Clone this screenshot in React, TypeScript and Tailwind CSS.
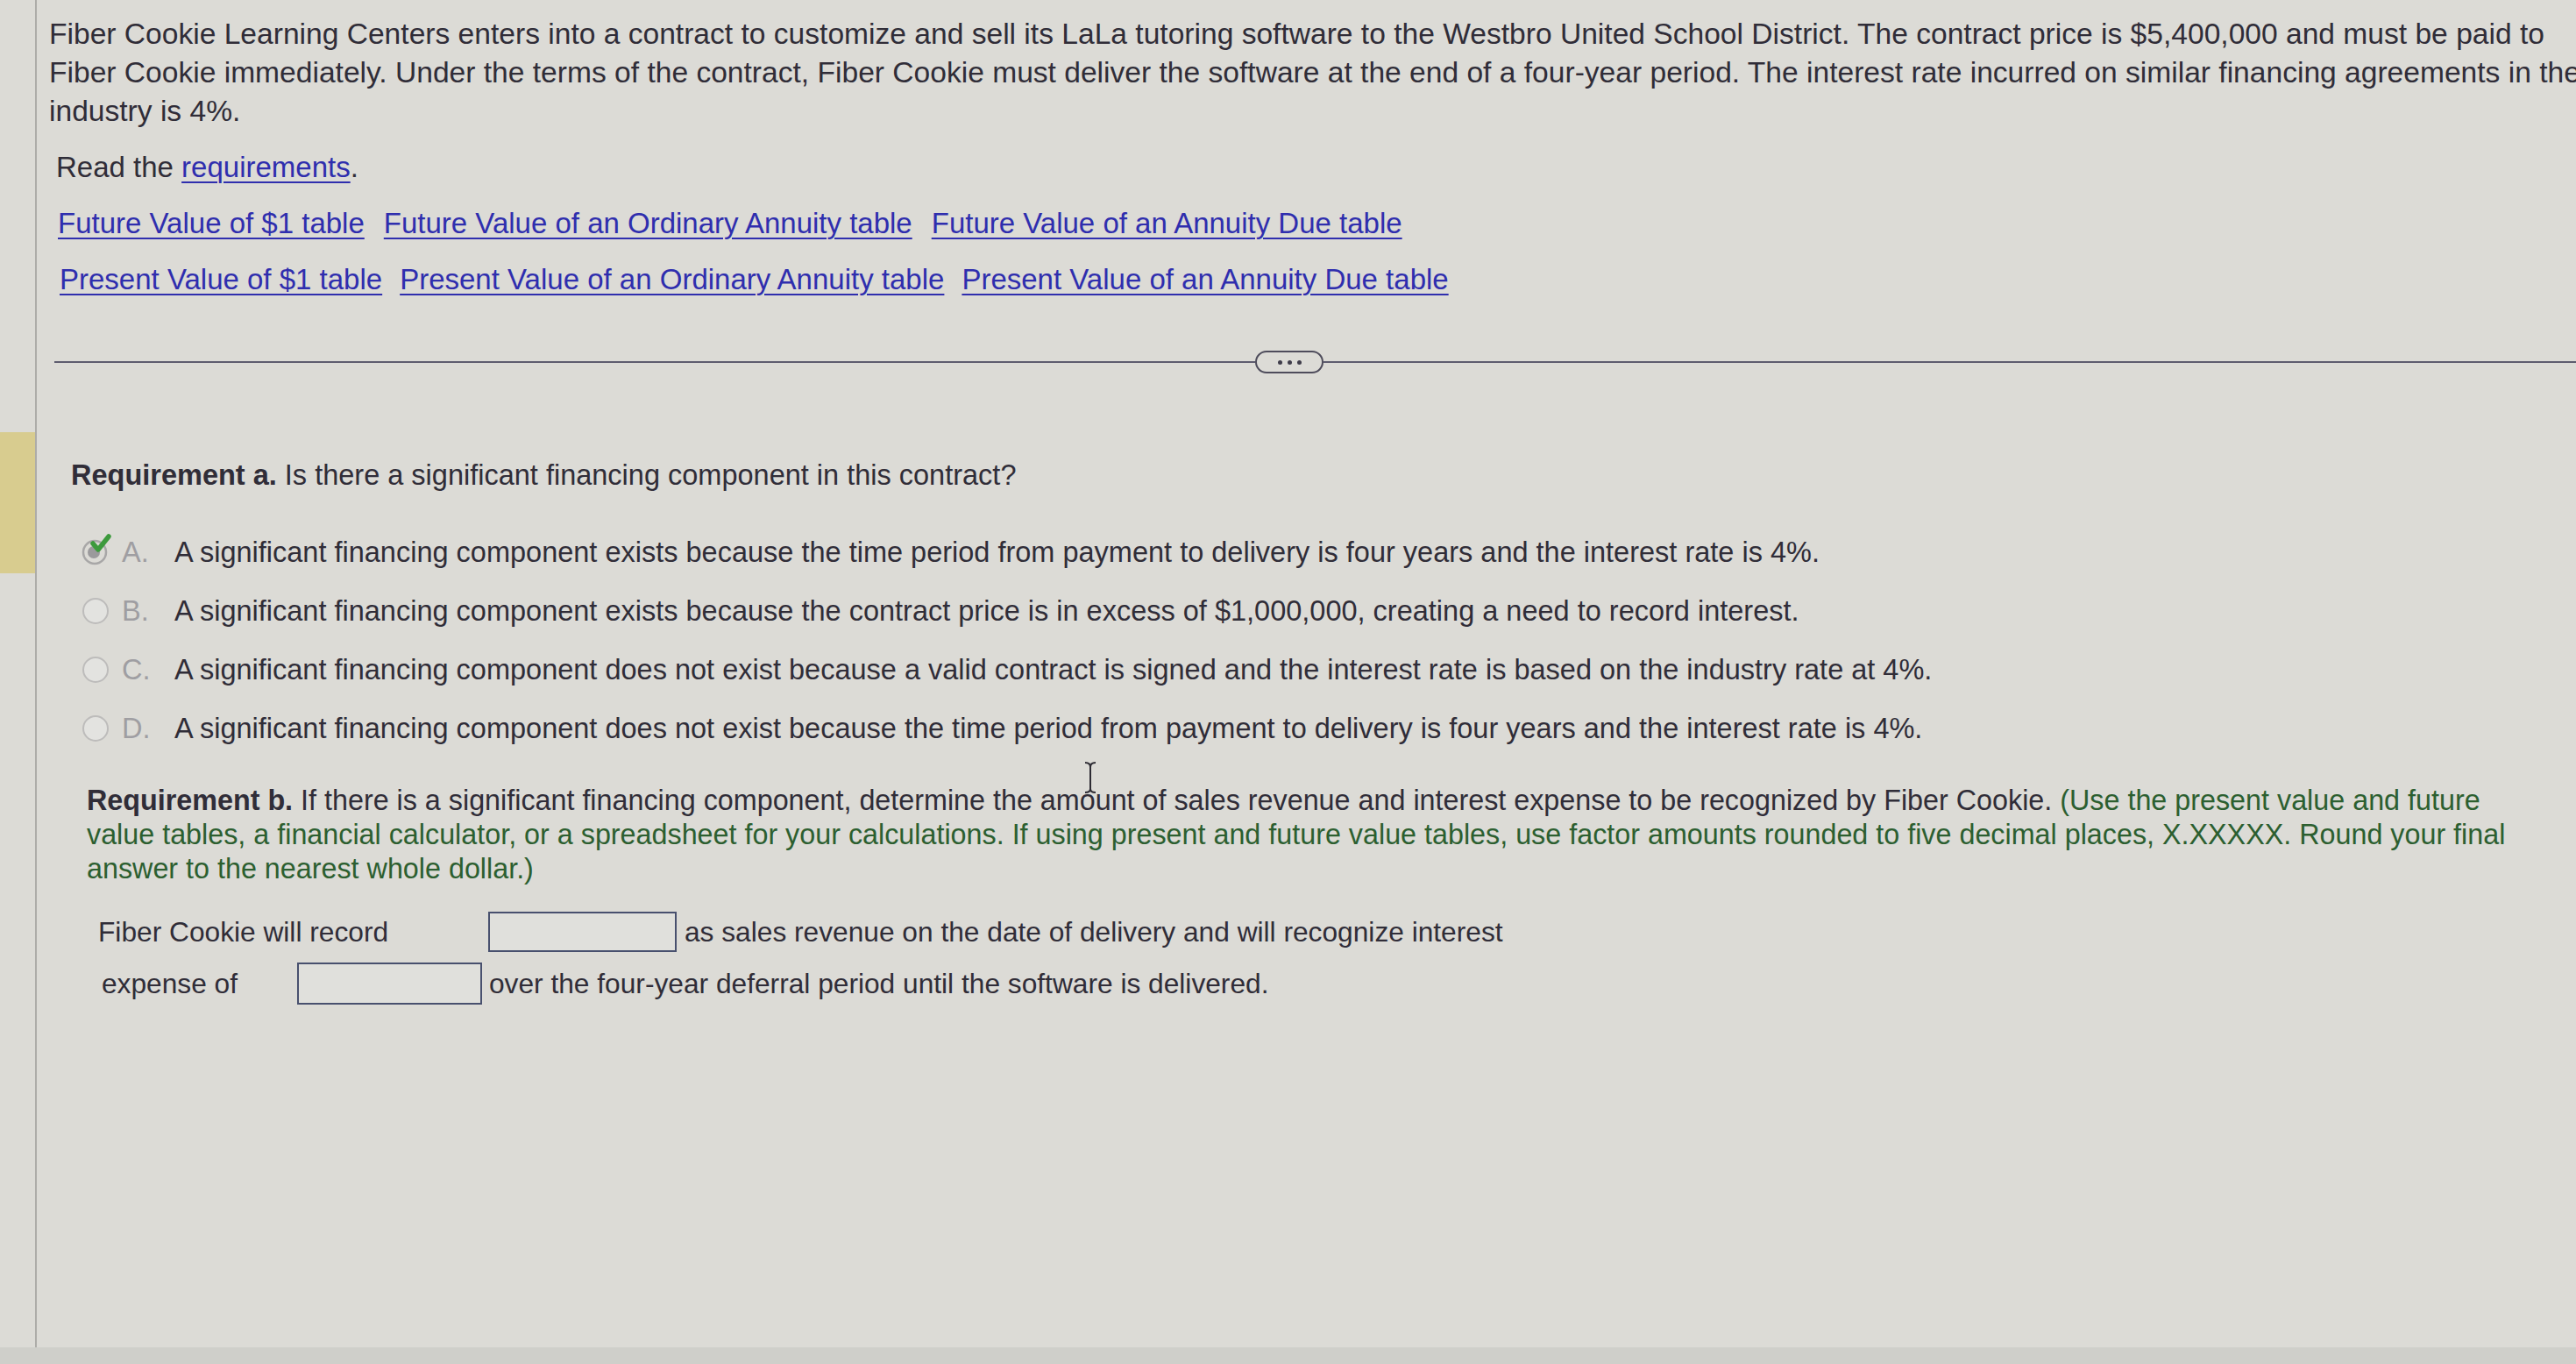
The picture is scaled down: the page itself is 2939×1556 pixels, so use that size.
import React from "react";

const font = { fontFamily: '"Liberation Sans", Arial, sans-serif' };

function Radio({ checked }: { checked?: boolean }) {
    if (checked) {
        return (
            <svg width="40" height="40" viewBox="0 0 40 40" className="shrink-0 -mt-[6px] -ml-[2px] -mr-[2px]">
                <circle cx="17" cy="23" r="13" fill="none" stroke="#a8a7a7" strokeWidth="2.5" />
                <circle cx="16" cy="23" r="7" fill="#9b9a9c" />
                <path d="M15 13 L21 20 L33 5" fill="none" stroke="#3d9a3d" strokeWidth="5.5" strokeLinejoin="round" strokeLinecap="round" />
            </svg>
        );
    }
    return (
        <svg width="36" height="36" viewBox="0 0 36 36" className="shrink-0">
            <circle cx="16" cy="18" r="14" fill="#e3e3e0" stroke="#bdbcbb" strokeWidth="2" />
        </svg>
    );
}

const options = [
    { key: "A.", text: "A significant financing component exists because the time period from payment to delivery is four years and the interest rate is 4%.", checked: true },
    { key: "B.", text: "A significant financing component exists because the contract price is in excess of $1,000,000, creating a need to record interest." },
    { key: "C.", text: "A significant financing component does not exist because a valid contract is signed and the interest rate is based on the industry rate at 4%." },
    { key: "D.", text: "A significant financing component does not exist because the time period from payment to delivery is four years and the interest rate is 4%." },
];

function TableLink({ children }: { children: React.ReactNode }) {
    return (
        <a href="#" className="text-[#2f2eae] underline decoration-[2px] underline-offset-[5px] whitespace-nowrap">
            {children}
        </a>
    );
}

export default function App() {
    return (
        <div style={font} className="w-[2939px] h-[1556px] overflow-hidden bg-[#dcdbd6] text-[#302d38] text-[32px] leading-[44px] flex flex-col">
            <div className="flex flex-1 min-h-0">
                {/* left rail with the current-question marker */}
                <div className="w-[40px] shrink-0">
                    <div className="mt-[493px] h-[161px] bg-[#d8cc8f]" />
                </div>

                <div className="flex-1 min-w-0 border-l-2 border-[#adaca8] relative">
                    <div className="pl-[14px] pt-[17px] whitespace-nowrap text-[33.6px]">
                        <div>Fiber Cookie Learning Centers enters into a contract to customize and sell its LaLa tutoring software to the Westbro United School District. The contract price is $5,400,000 and must be paid to</div>
                        <div>Fiber Cookie immediately. Under the terms of the contract, Fiber Cookie must deliver the software at the end of a four-year period. The interest rate incurred on similar financing agreements in the</div>
                        <div>industry is 4%.</div>
                    </div>

                    <div className="pl-[22px] mt-[20px] text-[33px]">
                        Read the <TableLink>requirements</TableLink>.
                    </div>

                    <div className="pl-[24px] mt-[20px] flex gap-[22px] text-[33px]">
                        <TableLink>Future Value of $1 table</TableLink>
                        <TableLink>Future Value of an Ordinary Annuity table</TableLink>
                        <TableLink>Future Value of an Annuity Due table</TableLink>
                    </div>
                    <div className="pl-[26px] mt-[20px] flex gap-[20px] text-[33px]">
                        <TableLink>Present Value of $1 table</TableLink>
                        <TableLink>Present Value of an Ordinary Annuity table</TableLink>
                        <TableLink>Present Value of an Annuity Due table</TableLink>
                    </div>

                    {/* collapsible divider */}
                    <div className="mt-[60px] ml-[20px] flex items-center h-[24px]">
                        <div className="w-[1370px] h-[2px] bg-[#5e5c6e]" />
                        <button className="w-[78px] h-[26px] rounded-full border-2 border-[#4e4c5b] flex items-center justify-center gap-[6px]">
                            <span className="w-[5px] h-[5px] rounded-full bg-[#3f3d4a]" />
                            <span className="w-[5px] h-[5px] rounded-full bg-[#3f3d4a]" />
                            <span className="w-[5px] h-[5px] rounded-full bg-[#3f3d4a]" />
                        </button>
                        <div className="flex-1 h-[2px] bg-[#5e5c6e]" />
                    </div>

                    <div className="mt-[95px] ml-[39px] text-[32.5px]">
                        <span className="font-bold">Requirement a.</span> Is there a significant financing component in this contract?
                    </div>

                    <div className="mt-[44px] ml-[51px] flex flex-col gap-[23px] text-[32.5px]">
                        {options.map((o) => (
                            <div key={o.key} className="flex items-center h-[44px] whitespace-nowrap">
                                <Radio checked={o.checked} />
                                <span className="w-[60px] ml-[10px] text-[#9f9ea2]">{o.key}</span>
                                <span>{o.text}</span>
                            </div>
                        ))}
                    </div>

                    <div className="mt-[41px] ml-[57px] leading-[39px] whitespace-nowrap relative text-[32.3px]">
                        <div>
                            <span className="font-bold">Requirement b.</span> If there is a significant financing component, determine the amount of sales revenue and interest expense to be recognized by Fiber Cookie.{" "}
                            <span className="text-[#2c5f30]">(Use the present value and future</span>
                        </div>
                        <div className="text-[#2c5f30]">value tables, a financial calculator, or a spreadsheet for your calculations. If using present and future value tables, use factor amounts rounded to five decimal places, X.XXXXX. Round your final</div>
                        <div className="text-[#2c5f30]">answer to the nearest whole dollar.)</div>
                        {/* mouse text cursor */}
                        <svg width="16" height="38" viewBox="0 0 16 38" className="absolute left-[1137px] top-[-26px]">
                            <path d="M2 2 Q8 2 8 7 Q8 2 14 2 M8 7 V32 M2 36 Q8 36 8 32 Q8 36 14 36" fill="none" stroke="#2d2b33" strokeWidth="2" />
                        </svg>
                    </div>

                    <div className="mt-[29px] ml-[70px] flex items-center h-[46px] whitespace-nowrap text-[31.7px]">
                        <span className="w-[445px]">Fiber Cookie will record</span>
                        <div className="w-[215px] h-[46px] border-2 border-[#48506e] bg-[#e0e0dc]" />
                        <span className="ml-[9px]">as sales revenue on the date of delivery and will recognize interest</span>
                    </div>
                    <div className="mt-[12px] ml-[74px] flex items-center h-[48px] whitespace-nowrap text-[31.7px]">
                        <span className="w-[223px]">expense of</span>
                        <div className="w-[211px] h-[48px] border-2 border-[#48506e] bg-[#e0e0dc]" />
                        <span className="ml-[8px]">over the four-year deferral period until the software is delivered.</span>
                    </div>
                </div>
            </div>
            <div className="h-[19px] bg-[#cfcfca]" />
        </div>
    );
}
